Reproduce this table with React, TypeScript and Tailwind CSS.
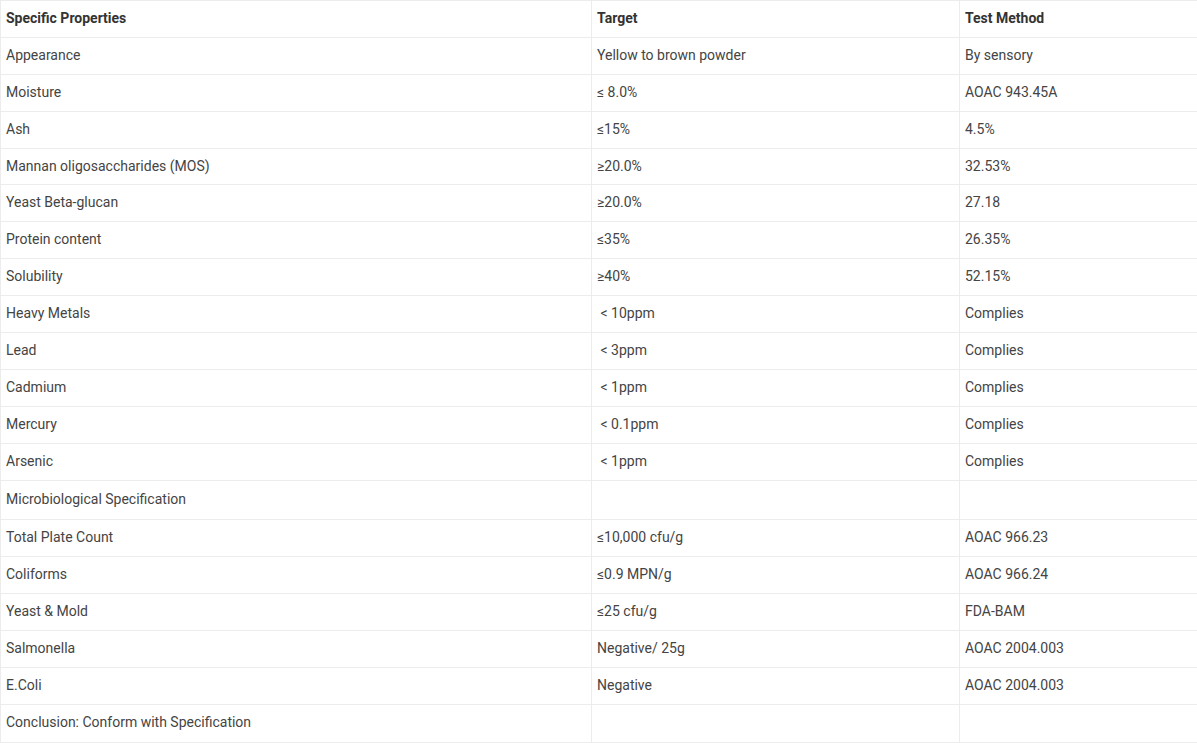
const rows: [string, string, string][] = [
  ["Appearance", "Yellow to brown powder", "By sensory"],
  ["Moisture", "≤ 8.0%", "AOAC 943.45A"],
  ["Ash", "≤15%", "4.5%"],
  ["Mannan oligosaccharides (MOS)", "≥20.0%", "32.53%"],
  ["Yeast Beta-glucan", "≥20.0%", "27.18"],
  ["Protein content", "≤35%", "26.35%"],
  ["Solubility", "≥40%", "52.15%"],
  ["Heavy Metals", "\u00a0< 10ppm", "Complies"],
  ["Lead", "\u00a0< 3ppm", "Complies"],
  ["Cadmium", "\u00a0< 1ppm", "Complies"],
  ["Mercury", "\u00a0< 0.1ppm", "Complies"],
  ["Arsenic", "\u00a0< 1ppm", "Complies"],
  ["Microbiological Specification", "", ""],
  ["Total Plate Count", "≤10,000 cfu/g", "AOAC 966.23"],
  ["Coliforms", "≤0.9 MPN/g", "AOAC 966.24"],
  ["Yeast & Mold", "≤25 cfu/g", "FDA-BAM"],
  ["Salmonella", "Negative/ 25g", "AOAC 2004.003"],
  ["E.Coli", "Negative", "AOAC 2004.003"],
  ["Conclusion: Conform with Specification", "", ""],
];

// row heights: metals block is a bit tighter, the spec/conclusion rows a bit taller
function rowHeight(i: number) {
  if (i === 12) return "h-[39px]";
  if (i === 18) return "h-[38px]";
  if (i > 12) return "h-[37px]";
  return "h-[36.9px]";
}

export default function App() {
  return (
    <div className="bg-white w-[1197px] h-[743px] overflow-hidden font-['Roboto',sans-serif] text-[14px] text-[#444]">
      <table className="w-[1197px] border-collapse table-fixed">
        <colgroup>
          <col className="w-[591px]" />
          <col className="w-[368px]" />
          <col className="w-[238px]" />
        </colgroup>
        <thead>
          <tr className="h-[36.9px]">
            <th className="border border-[#ececec] px-[5px] pb-[1px] text-left font-bold text-[#333]">Specific Properties</th>
            <th className="border border-[#ececec] px-[5px] pb-[1px] text-left font-bold text-[#333]">Target</th>
            <th className="border border-[#ececec] px-[5px] pb-[1px] text-left font-bold text-[#333]">Test Method</th>
          </tr>
        </thead>
        <tbody>
          {rows.map(([a, b, c], i) => (
            <tr key={a} className={rowHeight(i)}>
              <td className="border border-[#ececec] px-[5px] pb-[1px]">{a}</td>
              <td className="border border-[#ececec] px-[5px] pb-[1px]">{b}</td>
              <td className="border border-[#ececec] px-[5px] pb-[1px]">{c}</td>
            </tr>
          ))}
        </tbody>
      </table>
    </div>
  );
}
